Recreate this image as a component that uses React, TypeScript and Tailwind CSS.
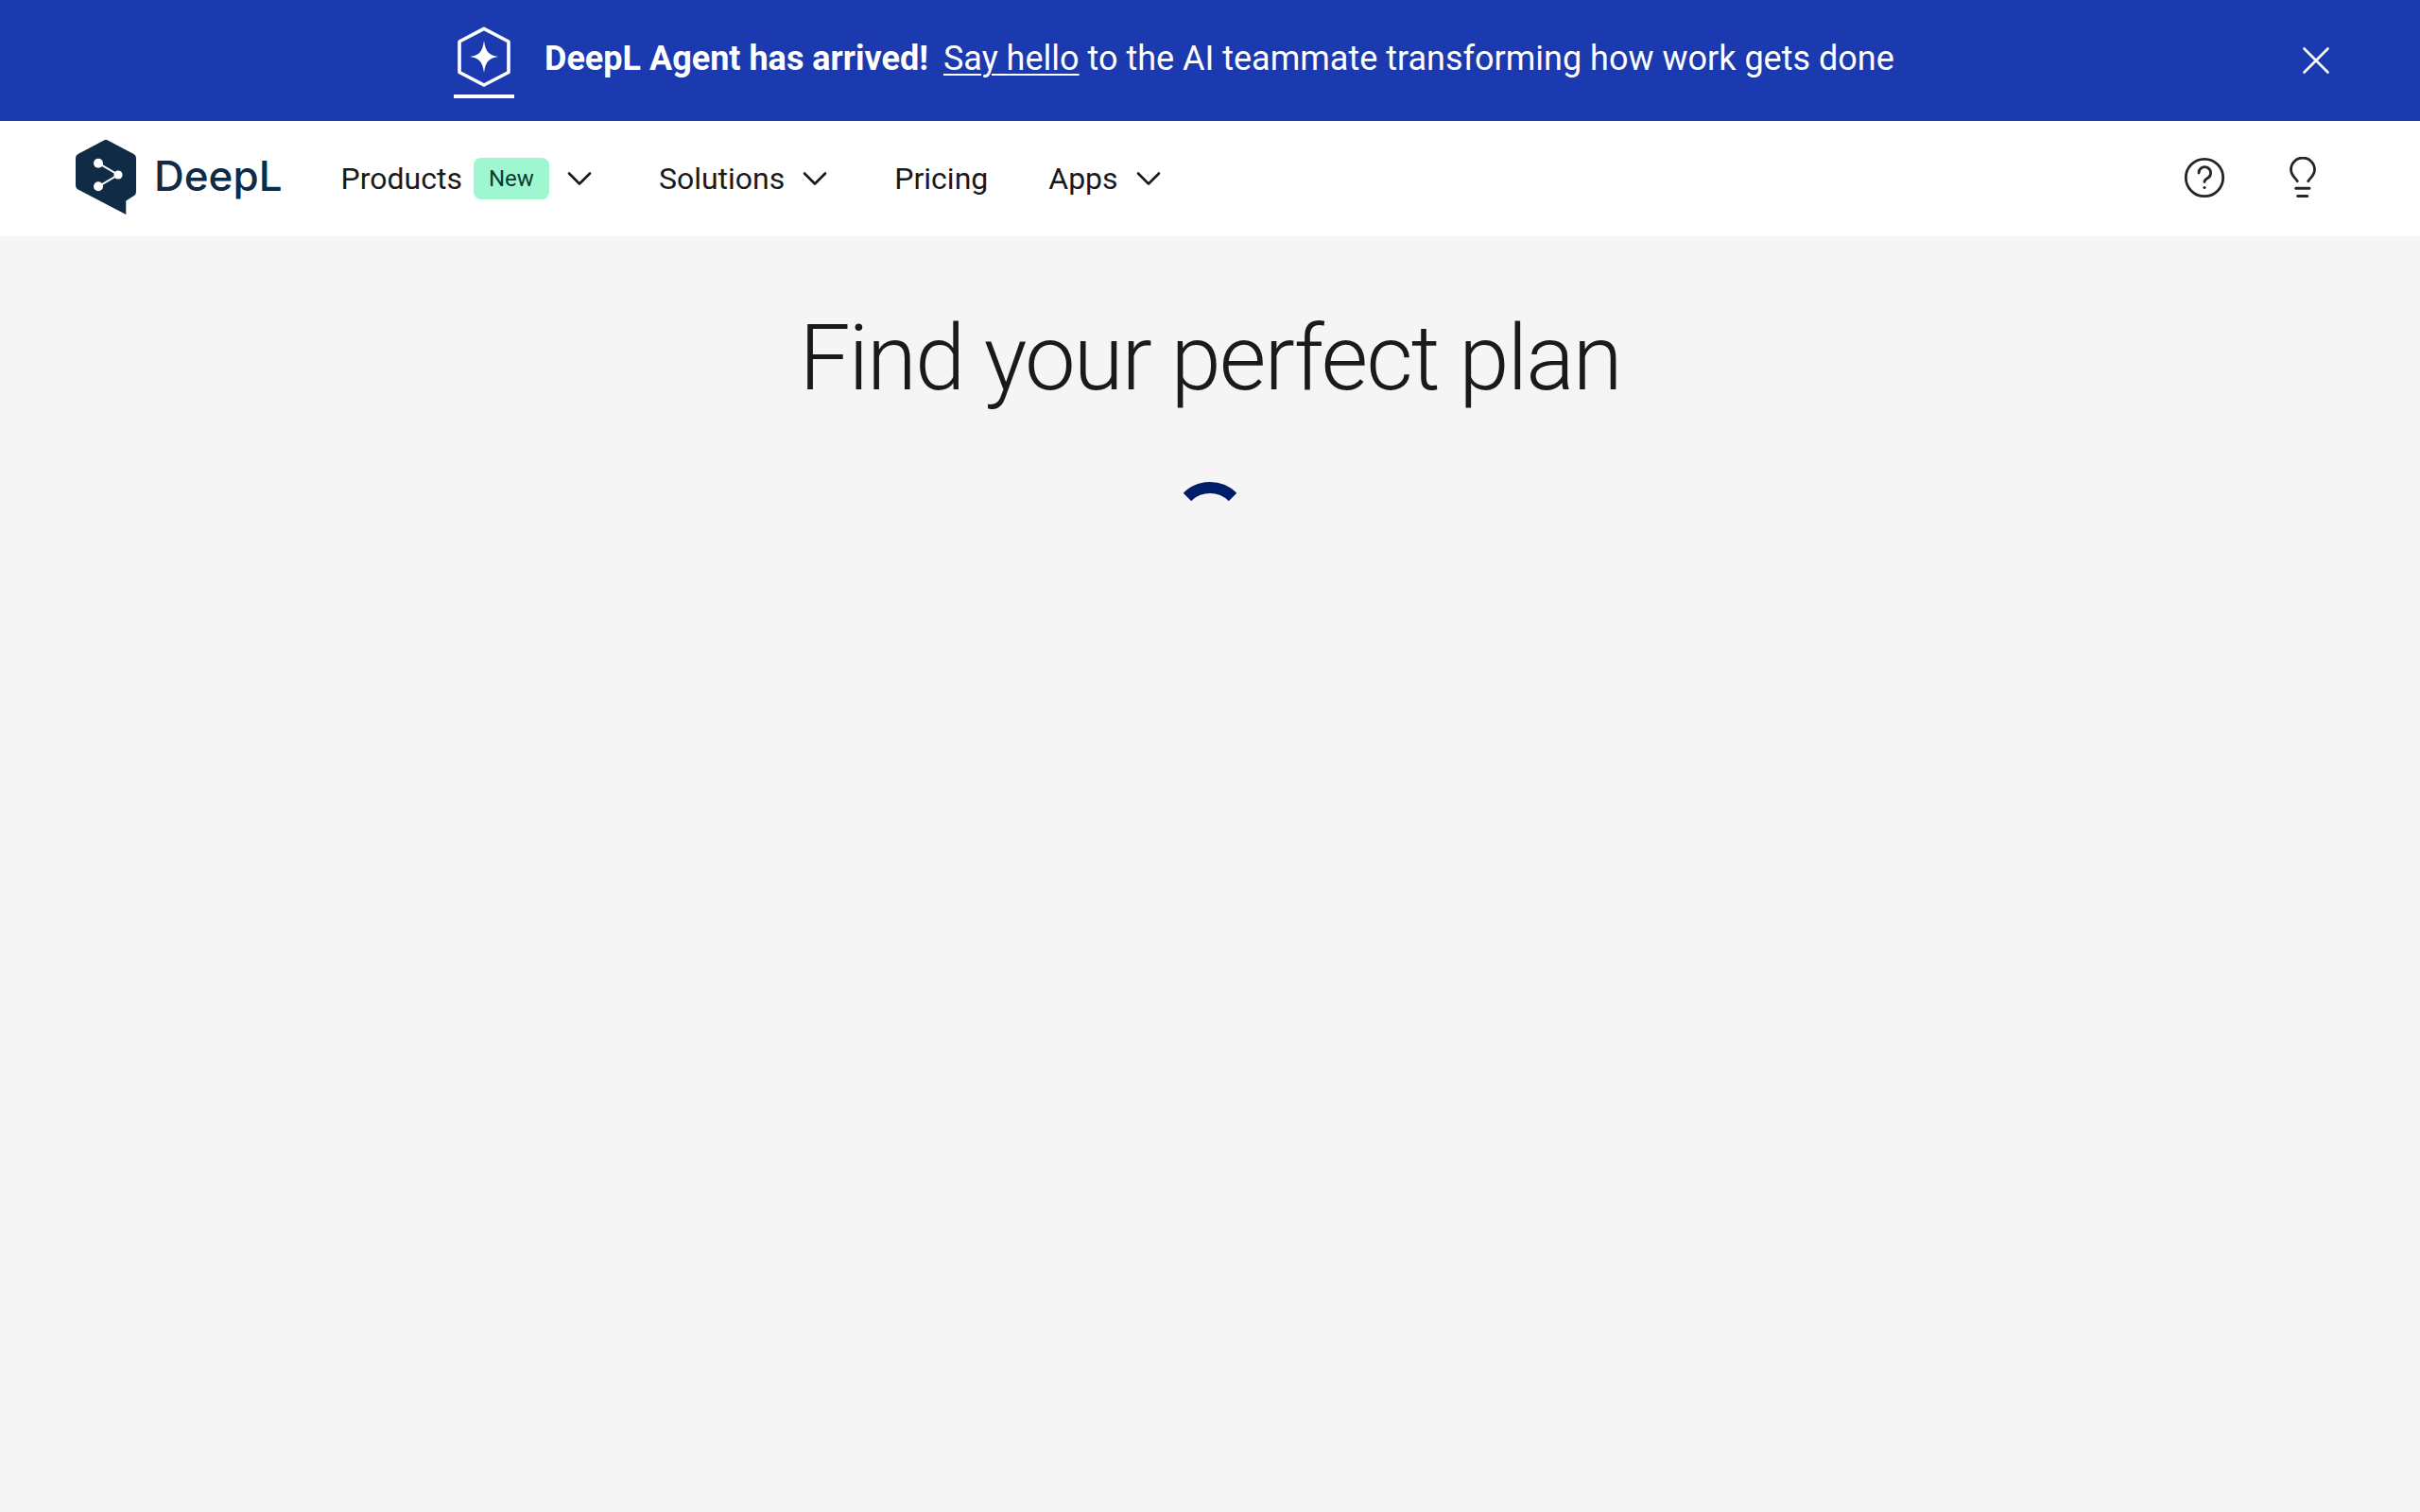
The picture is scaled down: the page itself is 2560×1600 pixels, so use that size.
import React from "react";

const Chevron = () => (
  <svg width="32" height="32" viewBox="0 0 32 32" fill="none" stroke="#1a1a1a" strokeWidth="2.6" strokeLinecap="round" strokeLinejoin="round" className="shrink-0">
    <path d="M5 10.500 16 21.500 27 10.500" />
  </svg>
);

export default function App() {
  return (
    <div className="min-h-[1600px] bg-[#f5f5f5] font-['Roboto',sans-serif] text-[#1a1a1a]">
      <div className="flex h-[128px] items-center justify-between bg-[#1b3aaf] pl-[480px] pr-[94px] text-white">
        <div className="flex items-center">
          <svg width="64" height="76" viewBox="0 0 64 76" fill="none" className="mt-[4px] shrink-0">
            <path d="M32 2.300 58 16V48.500L32 62 6 48.500V16Z" stroke="white" strokeWidth="3.600" strokeLinejoin="round" />
            <path d="M32 15C33.500 26 36.500 30.500 47 32 36.500 33.500 33.500 38 32 49 30.500 38 27.500 33.500 17 32 27.500 30.500 30.500 26 32 15Z" fill="white" />
            <rect x="0" y="72" width="64" height="4" fill="white" />
          </svg>
          <p className="mb-[4px] ml-[32px] text-[36px] leading-[48px]">
            <span className="font-bold">DeepL Agent has arrived!</span>
            <a className="ml-[16px] underline underline-offset-[4px] decoration-[2px]">Say hello</a>
            <span> to the AI teammate transforming how work gets done</span>
          </p>
        </div>
        <svg width="32" height="32" viewBox="0 0 32 32" fill="none" stroke="white" strokeWidth="2.600" strokeLinecap="round">
          <path d="M3.500 3.500 28.500 28.500M28.500 3.500 3.500 28.500" />
        </svg>
      </div>

      <nav className="flex h-[122px] items-center justify-between bg-white pl-[80px] pr-[110px]">
        <div className="flex items-center">
          <svg width="64" height="80" viewBox="0 0 64 80" className="mb-[2px] shrink-0">
            <path d="M29.500 0.700a5 5 0 0 1 5 0L61.500 15a5 5 0 0 1 2.500 4.300V55a5 5 0 0 1-2.500 4.300L53.300 64.500V79L2.500 52.500A5 5 0 0 1 0 48.200V19.300A5 5 0 0 1 2.500 15Z" fill="#0f2b46" />
            <path d="M24 24.700 45 37 24 49.300" fill="none" stroke="white" strokeWidth="2" />
            <circle cx="24" cy="24.700" r="5" fill="white" />
            <circle cx="45" cy="37" r="4.600" fill="white" />
            <circle cx="24" cy="49.300" r="5" fill="white" />
          </svg>
          <span className="mb-[6px] ml-[19px] font-['Inter',sans-serif] text-[44px] font-medium leading-none text-[#0f2b46]">DeepL</span>

          <div className="ml-[62px] flex items-center text-[32px] leading-[40px]">
            <span>Products</span>
            <span className="ml-[12px] flex h-[44px] w-[80px] items-center justify-center rounded-[8px] bg-[#9ef7d0] text-[24px] text-[#0a3b34]">New</span>
            <span className="ml-[16px]"><Chevron /></span>
            <span className="ml-[68px]">Solutions</span>
            <span className="ml-[16px]"><Chevron /></span>
            <span className="ml-[68px]">Pricing</span>
            <span className="ml-[64px]">Apps</span>
            <span className="ml-[16px]"><Chevron /></span>
          </div>
        </div>
        <div className="flex items-center gap-[68px]">
          <svg width="44" height="44" viewBox="0 0 44 44" fill="none" stroke="#262626" strokeWidth="2.800" strokeLinecap="round" className="mb-[2px]">
            <circle cx="22" cy="22" r="19.700" />
            <path d="M16 17a6.300 6.300 0 1 1 9.500 5.400c-2 1.200-3.500 2-3.500 4.200" />
            <circle cx="22" cy="32.500" r="1.600" fill="#262626" stroke="none" />
          </svg>
          <svg width="28" height="44" viewBox="0 0 28 44" fill="none" stroke="#262626" strokeWidth="2.800" strokeLinecap="round" className="mb-[2px]">
            <path d="M8.300 25.700C5.500 21.500 1.500 19.500 1.500 13.500a12.500 12.500 0 0 1 25 0C26.500 19.500 22.500 21.500 19.700 25.700" />
            <path d="M6.700 33.300H21M8.700 41.500H18.700" strokeWidth="3" />
          </svg>
        </div>
      </nav>

      <main className="flex flex-col items-center">
        <h1 className="mt-[67px] text-[96px] font-light leading-[124px] tracking-[-0.02em] text-[#1a1a1a]">Find your perfect plan</h1>
        <svg width="80" height="80" viewBox="0 0 80 80" fill="none" className="mt-[69px]">
          <path d="M15.960 15.960A34 34 0 0 1 64.040 15.960" stroke="#001d6c" strokeWidth="12" />
        </svg>
      </main>
    </div>
  );
}
